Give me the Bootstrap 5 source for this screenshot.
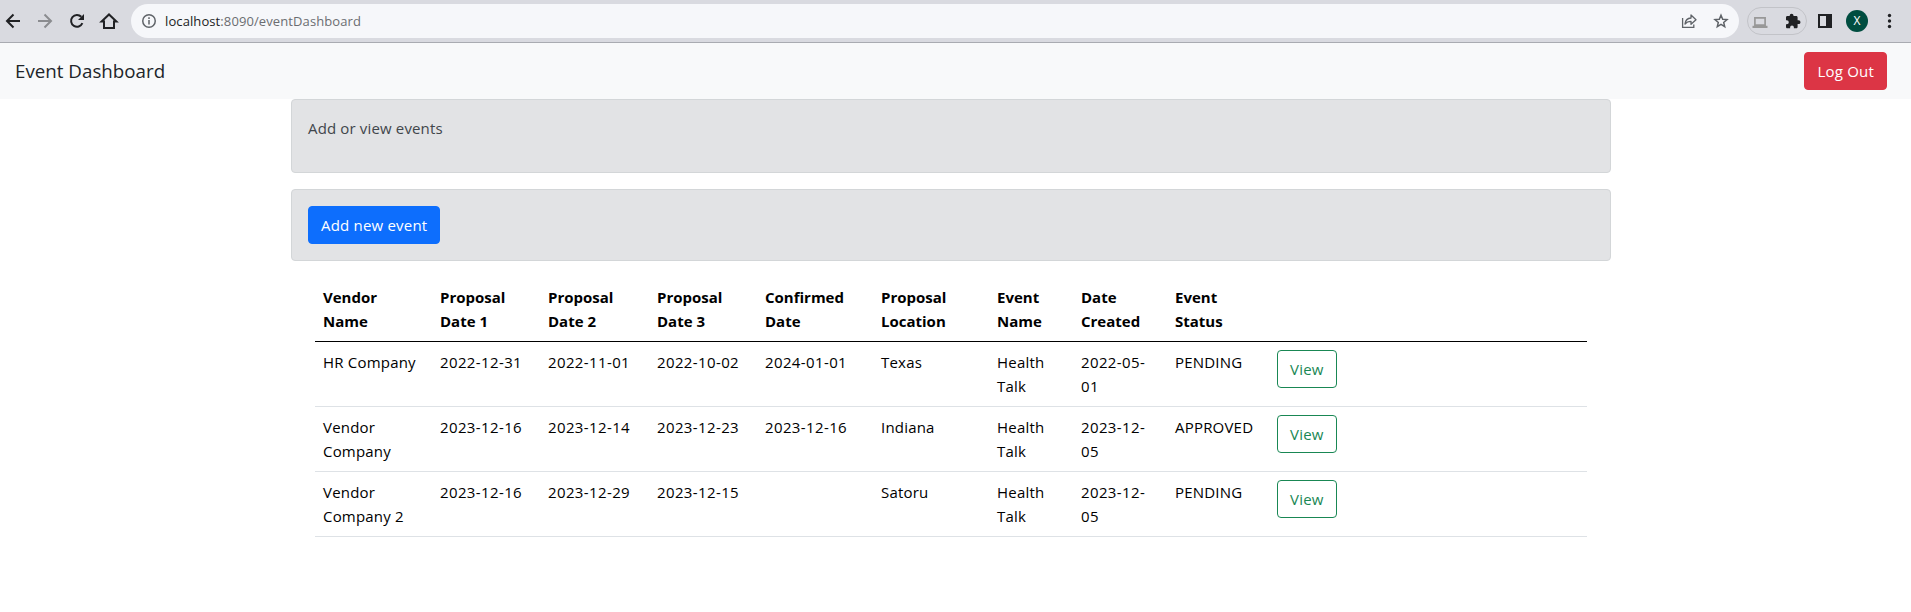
<!DOCTYPE html>
<html lang="en">
<head>
<meta charset="utf-8">
<title>Event Dashboard</title>
<link href="https://cdn.jsdelivr.net/npm/bootstrap@5.3.0/dist/css/bootstrap.min.css" rel="stylesheet">
<style>
body{font-family:"Open Sans","Noto Sans",sans-serif;font-size:15px;line-height:24px;color:#212529}
.chrome-bar{height:43px;background:#d9dae0;border-bottom:1px solid #a9abb1}
.chrome-bar svg{display:block;flex:none;width:20px;height:20px}
.nav-tools{gap:12px;padding-left:3px}
.address{height:34px;border-radius:17px;background:#f6f7fa;margin-left:12px;width:1608px;padding:0 8px 0 10px;font-size:13px;letter-spacing:.1px;color:#6b6d71}
.address .info{width:16px;height:16px;margin-right:8px}
.address .host{color:#202124}
.page-tools{gap:12px}
.ext-pill{width:60px;height:28px;border:1px solid #c2c3c8;border-radius:14px;margin-left:8px;padding:0 3px 0 2px}
.side-panel{margin:0 11px 0 8px}
.avatar{width:22px;height:22px;background:#004d40;color:#fff;font-size:12px;margin-right:11px}
.top-nav{height:56px;padding:8px 24px 8px 15px}
.top-nav .navbar-brand{font-size:18.75px;line-height:30px;padding:0;color:#212529}
.btn{font-size:15px;line-height:24px;border-radius:4px;padding:6px 12px;letter-spacing:.2px}
.page-area{padding-right:9px}
.panel{background:#e2e3e5;border:1px solid #d3d6d8;border-radius:4px;color:#41464b;letter-spacing:.15px}
.event-table{table-layout:fixed;color:#000}
.event-table th,.event-table td{padding:8px;background:none}
.event-table td{letter-spacing:.2px}
.event-table td.day{letter-spacing:.38px}
.event-table thead th{border-bottom-color:#000;vertical-align:bottom}
.c-vendor{width:117px}.c-prop{width:108px}.c-prop-last{width:109px}.c-conf,.c-loc{width:116px}.c-name{width:84px}.c-made{width:94px}.c-stat{width:102px}
</style>
</head>
<body>
<header class="chrome-bar d-flex align-items-center">
  <div class="nav-tools d-flex">
    <svg viewBox="0 0 20 20" fill="none" stroke="#202124" stroke-width="2"><path d="M17 10H4.500M10.500 3.500 4 10l6.500 6.500"/></svg>
    <svg viewBox="0 0 20 20" fill="none" stroke="#8b8c90" stroke-width="2"><path d="M3 10h12.500M9.500 3.500 16 10l-6.500 6.500"/></svg>
    <svg viewBox="0 0 20 20" fill="none" stroke="#202124" stroke-width="2"><path d="M15.400 12.200A5.900 5.900 0 1 1 14.300 5.800"/><path d="M17 3v6h-6z" fill="#202124" stroke="none"/></svg>
    <svg viewBox="0 0 20 20" fill="none" stroke="#202124" stroke-width="2"><path d="M2.600 10.400H5V17h10v-6.600h2.400L10 3.400z"/></svg>
  </div>
  <div class="address d-flex align-items-center">
    <svg class="info" viewBox="0 0 16 16" fill="none" stroke="#5f6368" stroke-width="1.500"><circle cx="8" cy="8" r="6.250"/><path d="M8 7v4.500M8 4.300v1.600"/></svg>
    <span><span class="host">localhost</span>:8090/eventDashboard</span>
    <div class="page-tools d-flex ms-auto">
      <svg viewBox="0 0 20 20" fill="none" stroke="#5f6368" stroke-width="1.300"><path d="M3.600 7v9.400h11.200V13.500"/><path d="M6 13c.4-3.700 2.400-5.800 6-6V4l5 4.700-5 4.600v-3c-2.700 0-4.500.8-6 2.700z" stroke-linejoin="round"/></svg>
      <svg viewBox="0 0 20 20" fill="none" stroke="#5f6368" stroke-width="1.500"><path d="m10 4.200 1.700 4 4.300.4-3.300 2.800 1 4.200-3.700-2.200-3.700 2.200 1-4.200L4 8.600l4.300-.4z"/></svg>
    </div>
  </div>
  <div class="ext-pill d-flex align-items-center justify-content-between">
    <svg viewBox="0 0 20 20"><path d="M4.900 6.900h10.200v7.200H4.900z" fill="none" stroke="#989898" stroke-width="1.700"/><path d="M2.500 14.800h15v2.200h-15z" fill="#989898"/></svg>
    <svg viewBox="0 0 20 20" fill="#202124"><path d="M15.600 9.300h-1V6.500c0-.8-.6-1.400-1.400-1.400h-2.700V4.600a1.900 1.900 0 0 0-3.800 0v.5H4.400C3.600 5.100 3 5.700 3 6.500v2.700h.8a2 2 0 0 1 0 4H3v2.700c0 .8.600 1.400 1.400 1.400h2.700v-.8a1.900 1.900 0 0 1 3.800 0v.8h2.300c.8 0 1.400-.6 1.400-1.400v-2.800h1a1.900 1.900 0 0 0 0-3.800z"/></svg>
  </div>
  <svg class="side-panel" viewBox="0 0 20 20"><path fill="#202124" fill-rule="evenodd" d="M3 3h14v14H3zM5 5v10h6V5z"/></svg>
  <span class="avatar rounded-circle d-flex align-items-center justify-content-center">X</span>
  <svg viewBox="0 0 20 20" fill="#202124"><circle cx="10.500" cy="4.500" r="1.700"/><circle cx="10.500" cy="10" r="1.700"/><circle cx="10.500" cy="15.500" r="1.700"/></svg>
</header>
<nav class="navbar bg-light top-nav d-flex justify-content-between">
  <a class="navbar-brand" href="#">Event Dashboard</a>
  <button class="btn btn-danger">Log Out</button>
</nav>
<div class="page-area">
<main class="container px-0">
  <div class="panel p-3 mb-3"><p class="mb-3">Add or view events</p></div>
  <div class="panel p-3 mb-3"><button class="btn btn-primary">Add new event</button></div>
  <div class="px-4">
  <table class="table event-table">
    <colgroup><col class="c-vendor"><col class="c-prop"><col class="c-prop-last"><col class="c-prop"><col class="c-conf"><col class="c-loc"><col class="c-name"><col class="c-made"><col class="c-stat"><col></colgroup>
    <thead><tr><th>Vendor Name</th><th>Proposal Date 1</th><th>Proposal Date 2</th><th>Proposal Date 3</th><th>Confirmed Date</th><th>Proposal Location</th><th>Event Name</th><th>Date Created</th><th>Event Status</th><th></th></tr></thead>
    <tbody>
    <tr><td>HR Company</td><td class="day">2022-12-31</td><td class="day">2022-11-01</td><td class="day">2022-10-02</td><td class="day">2024-01-01</td><td>Texas</td><td>Health Talk</td><td class="day">2022-05-<br>01</td><td>PENDING</td><td><button class="btn btn-outline-success">View</button></td></tr>
    <tr><td>Vendor Company</td><td class="day">2023-12-16</td><td class="day">2023-12-14</td><td class="day">2023-12-23</td><td class="day">2023-12-16</td><td>Indiana</td><td>Health Talk</td><td class="day">2023-12-<br>05</td><td>APPROVED</td><td><button class="btn btn-outline-success">View</button></td></tr>
    <tr><td>Vendor Company 2</td><td class="day">2023-12-16</td><td class="day">2023-12-29</td><td class="day">2023-12-15</td><td></td><td>Satoru</td><td>Health Talk</td><td class="day">2023-12-<br>05</td><td>PENDING</td><td><button class="btn btn-outline-success">View</button></td></tr>
    </tbody>
  </table>
  </div>
</main>
</div>
</body>
</html>
